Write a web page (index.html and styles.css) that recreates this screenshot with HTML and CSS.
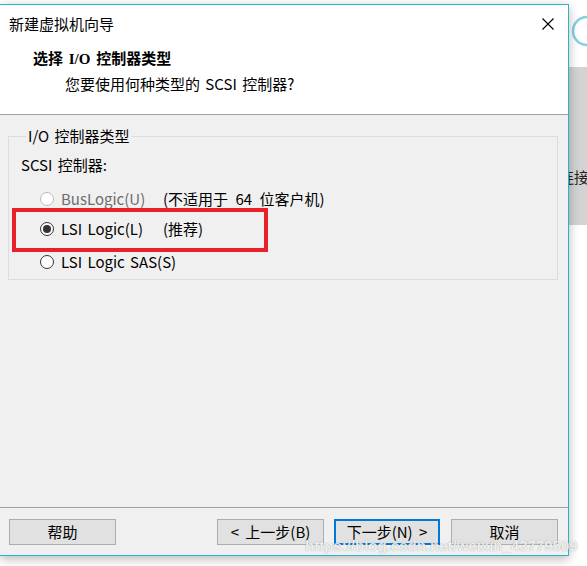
FILE: index.html
```html
<!DOCTYPE html>
<html lang="zh-CN">
<head>
    <meta charset="UTF-8">
    <title>新建虚拟机向导</title>
    <link rel="stylesheet" href="styles.css">
</head>
<body>
    <div class="desktop">
        <!-- Wizard dialog -->
        <div class="dialog">
            <div class="header">
                <div class="titlebar">
                    <span class="title">新建虚拟机向导</span>
                    <svg class="close" width="12" height="12" viewBox="0 0 12 12">
                        <path d="M0.5 0.5 L11.5 11.5 M11.5 0.5 L0.5 11.5" stroke="#000" stroke-width="1.1" fill="none"/>
                    </svg>
                </div>
                <div class="heading">选择 I/O 控制器类型</div>
                <div class="subtitle">您要使用何种类型的 SCSI 控制器?</div>
            </div>

            <div class="body">
                <fieldset class="group">
                    <legend>I/O 控制器类型</legend>
                    <div class="group-label">SCSI 控制器:</div>
                    <div class="options">
                        <div class="option disabled">
                            <span class="radio"></span>
                            <span class="option-name">BusLogic(U)</span>
                            <span class="option-note">(不适用于 64 位客户机)</span>
                        </div>
                        <div class="option">
                            <span class="radio checked"></span>
                            <span class="option-name">LSI Logic(L)</span>
                            <span class="option-note">(推荐)</span>
                            <div class="mark"></div>
                        </div>
                        <div class="option option-last">
                            <span class="radio"></span>
                            <span class="option-name">LSI Logic SAS(S)</span>
                        </div>
                    </div>
                </fieldset>
            </div>

            <div class="footer">
                <button class="btn">帮助</button>
                <div class="spacer"></div>
                <button class="btn">&lt; 上一步(B)</button>
                <button class="btn btn-default">下一步(N) &gt;</button>
                <button class="btn">取消</button>
            </div>
        </div>

        <!-- Window behind the dialog -->
        <div class="side">
            <div class="side-top">
                <svg width="18" height="66" viewBox="0 0 18 66">
                    <circle cx="18" cy="31" r="14" stroke="#86d0e2" stroke-width="2.5" fill="none"/>
                </svg>
            </div>
            <div class="side-band">连接</div>
        </div>

        <div class="watermark">https://blog.csdn.net/weixin_43779509</div>
    </div>
</body>
</html>
```

FILE: styles.css
```css
body {
    margin: 0;
    background-color: #fff;
    font-family: "Noto Sans CJK SC", sans-serif;
    font-size: 15px;
    color: #000;
}

.desktop {
    position: relative;
    display: flex;
    align-items: flex-start;
    width: 587px;
    height: 566px;
    overflow: hidden;
}

.dialog {
    position: relative;
    z-index: 1;
    display: flex;
    flex-direction: column;
    width: 569px;
    height: 552px;
    margin-top: 4px;
    box-sizing: border-box;
    border: 1px solid #2ab4c6;
    border-left: none;
    background-color: #f0f0f0;
    box-shadow: 0 3px 10px rgba(0, 0, 0, 0.28);
}

/* Header */
.header {
    height: 109px;
    background-color: #fff;
    border-bottom: 1px solid #a0a0a0;
}

.titlebar {
    display: flex;
    justify-content: space-between;
    align-items: center;
    height: 37px;
    padding: 0 14px 0 9px;
    line-height: 20px;
}

.title {
    padding-top: 1px;
}

.heading {
    margin: 7px 0 0 33px;
    font-family: "Liberation Serif", "Noto Sans CJK SC", serif;
    font-weight: bold;
    font-size: 15px;
    line-height: 20px;
    word-spacing: 2px;
}

.subtitle {
    margin: 5px 0 0 65px;
    line-height: 20px;
    word-spacing: 2px;
}

/* Body */
.body {
    flex: 1;
    border-bottom: 1px solid #a0a0a0;
}

.group {
    margin: 11px 10px 0 8px;
    padding: 9px 12px 7px 12px;
    border: 1px solid #dcdcdc;
    min-width: 0;
}

.group legend {
    margin-left: 5px;
    padding: 0 2px;
    line-height: 20px;
    word-spacing: 2px;
}

.group-label {
    line-height: 20px;
    word-spacing: 2px;
}

.options {
    display: flex;
    flex-direction: column;
    gap: 10px;
    margin-top: 14px;
}

.option {
    position: relative;
    display: flex;
    align-items: center;
    height: 20px;
    line-height: 20px;
    padding-left: 19px;
    white-space: nowrap;
    word-spacing: 2px;
}

.option-last {
    margin-top: 3px;
}

.option-name {
    min-width: 102px;
    margin-left: 7px;
}

.option-note {
    word-spacing: 4px;
}

.option.disabled .option-name {
    color: #6d6d6d;
}

.radio {
    position: relative;
    width: 12px;
    height: 12px;
    border: 1px solid #333;
    border-radius: 50%;
    background-color: #fff;
    flex-shrink: 0;
}

.option.disabled .radio {
    border-color: #bcbcbc;
}

.radio.checked::after {
    content: "";
    position: absolute;
    left: 2px;
    top: 2px;
    width: 8px;
    height: 8px;
    border-radius: 50%;
    background-color: #333;
}

/* red annotation box drawn over the screenshot */
.mark {
    position: absolute;
    left: -9px;
    top: -11px;
    width: 256px;
    height: 44px;
    box-sizing: border-box;
    border: 4px solid #e8202a;
}

/* Footer */
.footer {
    display: flex;
    align-items: flex-start;
    height: 47px;
    box-sizing: border-box;
    padding: 11px 10px 0 9px;
}

.spacer {
    flex: 1;
}

.btn {
    width: 107px;
    height: 26px;
    margin-left: 10px;
    padding: 0;
    box-sizing: border-box;
    font-family: "Noto Sans CJK SC", sans-serif;
    font-size: 15px;
    line-height: 20px;
    word-spacing: 3px;
    color: #000;
    background-color: #e1e1e1;
    border: 1px solid #adadad;
}

.btn:first-child {
    margin-left: 0;
}

.btn-default {
    width: 106px;
    border: 2px solid #0078d7;
}

.btn-default + .btn {
    margin-left: 11px;
}

/* Background window */
.side {
    flex: 1;
    display: flex;
    flex-direction: column;
    overflow: hidden;
}

.side-top {
    height: 67px;
    background-color: #fff;
}

.side-top svg {
    display: block;
}

.side-band {
    height: 158px;
    box-sizing: border-box;
    padding-top: 100px;
    margin-left: -10px;
    background-color: #d3d3d3;
    line-height: 20px;
    white-space: nowrap;
    color: #222;
}

.watermark {
    position: absolute;
    z-index: 2;
    left: 305px;
    top: 537px;
    font-family: "Liberation Sans", Arial, sans-serif;
    font-weight: bold;
    font-size: 15px;
    line-height: 17px;
    color: rgba(255, 255, 255, 0.85);
    text-shadow: 0 0 1px rgba(0, 0, 0, 0.4);
    white-space: nowrap;
}
```
